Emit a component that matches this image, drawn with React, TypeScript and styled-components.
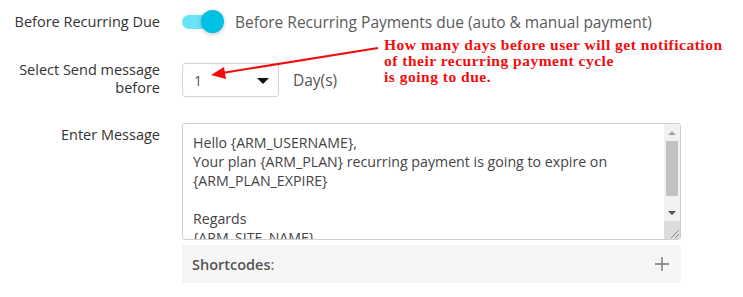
import styled, { createGlobalStyle } from "styled-components";

const GlobalStyle = createGlobalStyle`
    body {
        margin: 0;
        background: #ffffff;
        font-family: "Open Sans", "Noto Sans", sans-serif;
    }
`;

const Page = styled.div`
    position: relative;
    width: 743px;
    height: 297px;
    overflow: hidden;
    background: #ffffff;
`;

const Form = styled.div`
    display: flex;
    flex-direction: column;
`;

interface RowProps {
    top: number;
}

const Row = styled.div<RowProps>`
    display: grid;
    grid-template-columns: 160px 1fr;
    column-gap: 22px;
    margin-top: ${({ top }) => top}px;
`;

interface LabelProps {
    shift?: number;
}

const Label = styled.div<LabelProps>`
    text-align: right;
    font-size: 14.5px;
    line-height: 18px;
    color: #333333;
    margin-top: ${({ shift }) => shift ?? 0}px;
    align-self: ${({ shift }) => (shift === undefined ? "center" : "start")};
`;

const ToggleLine = styled.div`
    display: flex;
    align-items: center;
    height: 44px;
    gap: 11px;
`;

const Switch = styled.div`
    position: relative;
    width: 42px;
    height: 24px;
    display: flex;
    align-items: center;

    .track {
        width: 40px;
        height: 14px;
        border-radius: 7px;
        background: #6be3f6;
    }

    .knob {
        position: absolute;
        right: 0;
        top: 0;
        width: 23px;
        height: 23px;
        border-radius: 50%;
        background: #00c1e2;
        box-shadow: 0 1px 4px rgba(0, 0, 0, 0.25);
    }
`;

const ToggleText = styled.span`
    font-size: 15.5px;
    color: #5a5a5a;
`;

const SelectLine = styled.div`
    display: flex;
    align-items: center;
    gap: 14px;
`;

const SelectBox = styled.div`
    box-sizing: border-box;
    width: 97px;
    height: 34px;
    border: 1px solid #d4d4d4;
    border-radius: 3px;
    display: flex;
    align-items: center;
    justify-content: space-between;
    padding: 0 9px 0 11px;
    font-size: 14px;
    color: #555555;

    .caret {
        width: 0;
        height: 0;
        border-left: 6px solid transparent;
        border-right: 6px solid transparent;
        border-top: 6px solid #111111;
        margin-top: 2px;
    }
`;

const Unit = styled.span`
    font-size: 15.5px;
    color: #555555;
`;

const Note = styled.div`
    position: absolute;
    left: 384px;
    top: 37px;
    font-family: "Liberation Serif", "Times New Roman", serif;
    font-weight: 700;
    font-size: 15.5px;
    letter-spacing: 0.5px;
    line-height: 16px;
    color: #f20d0d;
`;

const Pointer = styled.svg`
    position: absolute;
    left: 0;
    top: 0;
    pointer-events: none;
`;

const MessageColumn = styled.div`
    display: flex;
    flex-direction: column;
    gap: 5px;
    width: 499px;
`;

const MessageBox = styled.div`
    box-sizing: border-box;
    height: 117px;
    border: 1px solid #cfcfcf;
    border-radius: 3px;
    display: flex;
    overflow: hidden;
`;

const MessageText = styled.div`
    flex: 1;
    padding: 9px 10px 0 10px;
    font-size: 14.2px;
    line-height: 19px;
    color: #444444;
    white-space: pre-line;
    overflow: hidden;
`;

const Scrollbar = styled.div`
    width: 16px;
    display: flex;
    flex-direction: column;
    background: #f1f1f1;

    .btn {
        height: 17px;
        display: flex;
        align-items: center;
        justify-content: center;
    }

    .up {
        border-left: 4px solid transparent;
        border-right: 4px solid transparent;
        border-bottom: 4px solid #a3a3a3;
    }

    .down {
        border-left: 4px solid transparent;
        border-right: 4px solid transparent;
        border-top: 4px solid #505050;
    }

    .thumb {
        height: 55px;
        margin: 0 2px;
        background: #c1c1c1;
    }

    .rest {
        flex: 1;
    }

    .corner {
        height: 18px;
        background: #dcdcdc;
        display: flex;
        align-items: flex-end;
        justify-content: flex-end;
    }
`;

const ShortcodeBar = styled.div`
    height: 38px;
    background: #f7f6f6;
    display: flex;
    align-items: center;
    justify-content: space-between;
    padding: 0 12px 0 10px;
    font-size: 14.5px;
    color: #555555;

    b {
        font-weight: 600;
    }
`;

const message = `Hello {ARM_USERNAME},
Your plan {ARM_PLAN} recurring payment is going to expire on
{ARM_PLAN_EXPIRE}

Regards
{ARM_SITE_NAME}`;

const App = () => {
    return (
        <Page>
            <GlobalStyle />
            <Form>
                <Row top={0}>
                    <Label>Before Recurring Due</Label>
                    <ToggleLine>
                        <Switch>
                            <div className="track" />
                            <div className="knob" />
                        </Switch>
                        <ToggleText>
                            Before Recurring Payments due (auto &amp; manual payment)
                        </ToggleText>
                    </ToggleLine>
                </Row>
                <Row top={19}>
                    <Label shift={-2}>
                        Select Send message
                        <br />
                        before
                    </Label>
                    <SelectLine>
                        <SelectBox>
                            <span>1</span>
                            <span className="caret" />
                        </SelectBox>
                        <Unit>Day(s)</Unit>
                    </SelectLine>
                </Row>
                <Row top={26}>
                    <Label shift={3}>Enter Message</Label>
                    <MessageColumn>
                        <MessageBox>
                            <MessageText>{message}</MessageText>
                            <Scrollbar>
                                <div className="btn">
                                    <span className="up" />
                                </div>
                                <div className="thumb" />
                                <div className="rest" />
                                <div className="btn">
                                    <span className="down" />
                                </div>
                                <div className="corner">
                                    <svg width="12" height="12" viewBox="0 0 12 12">
                                        <path d="M11 3 L3 11 M11 7 L7 11" stroke="#8a8a8a" strokeWidth="1" />
                                    </svg>
                                </div>
                            </Scrollbar>
                        </MessageBox>
                        <ShortcodeBar>
                            <span>
                                <b>Shortcodes</b>:
                            </span>
                            <svg width="14" height="14" viewBox="0 0 14 14">
                                <path d="M7 0 V14 M0 7 H14" stroke="#777777" strokeWidth="1.4" />
                            </svg>
                        </ShortcodeBar>
                    </MessageColumn>
                </Row>
            </Form>
            <Pointer width="743" height="297" viewBox="0 0 743 297">
                <line x1="378" y1="48" x2="222" y2="73" stroke="#f20d0d" strokeWidth="2" />
                <polygon points="211,75 224,67 226,79" fill="#f20d0d" />
            </Pointer>
            <Note>
                How many days before user will get notification
                <br />
                of their recurring payment cycle
                <br />
                is going to due.
            </Note>
        </Page>
    );
};

export default App;
